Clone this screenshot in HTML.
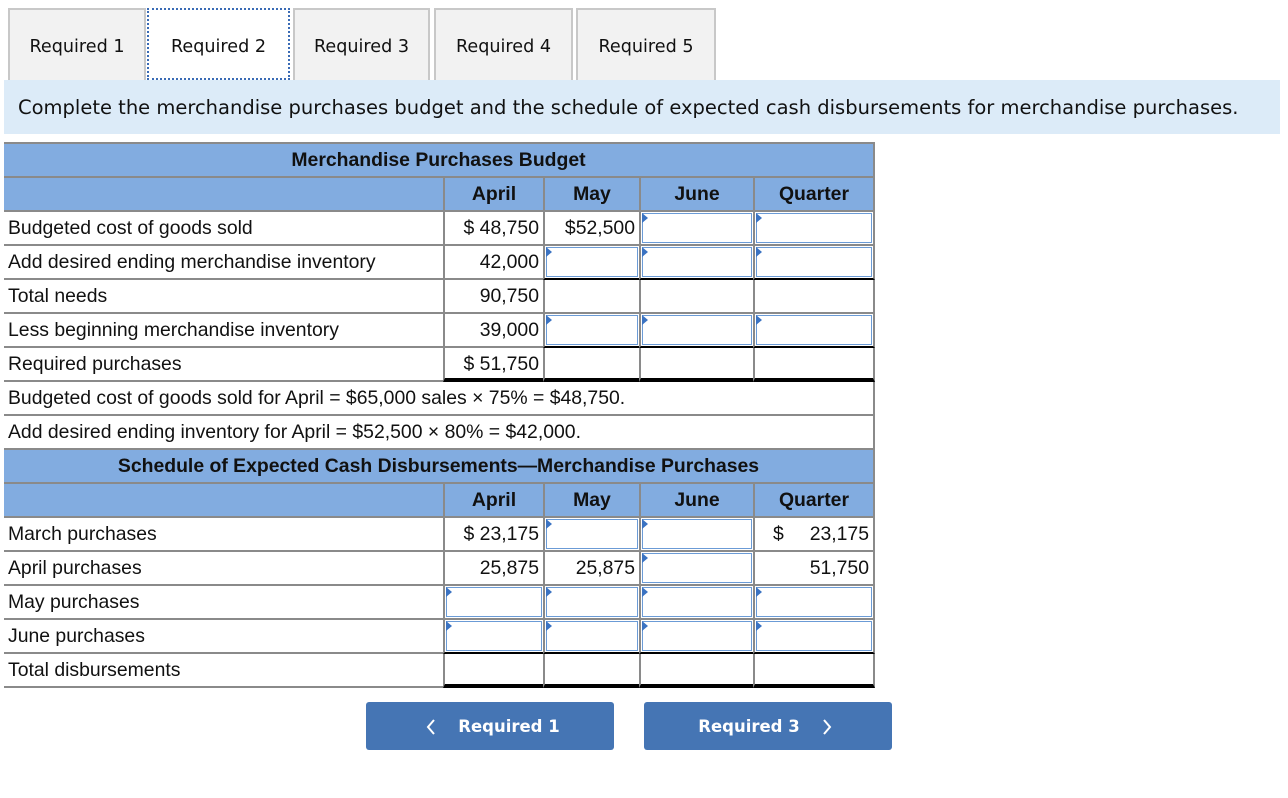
<!DOCTYPE html>
<html><head><meta charset="utf-8"><style>
body{margin:0;width:1288px;height:798px;background:#fff;position:relative;overflow:hidden;font-family:"Liberation Sans",Arial,sans-serif;}
.tab{position:absolute;top:8px;height:72px;background:#f2f2f2;border:2px solid #c8c8c8;border-bottom:none;box-sizing:border-box;font-family:"DejaVu Sans",Verdana,sans-serif;font-size:17.6px;color:#111;text-align:center;line-height:74px;}
.tab.act{background:#fff;border:2px dotted #3a6bb5;height:72px}
.bar{position:absolute;left:4px;top:80px;width:1276px;height:54px;background:#dcebf8;font-family:"DejaVu Sans",Verdana,sans-serif;font-size:19.5px;line-height:56px;color:#111;padding-left:14px;box-sizing:border-box;white-space:nowrap}
.t{position:absolute;left:4px;top:142px;width:871px;font-size:19.4px;color:#111}
.r{display:flex;height:34px}
.c{box-sizing:border-box;height:34px;border-bottom:2px solid #8a8a8a;line-height:32px;white-space:nowrap;overflow:hidden;position:relative;padding:0 4px}
.c1{width:439px}
.c2{width:100px;border-left:2px solid #8a8a8a;text-align:right}
.c3{width:96px;border-left:2px solid #8a8a8a;text-align:right}
.c4{width:114px;border-left:2px solid #8a8a8a;text-align:right}
.c5{width:122px;border-left:2px solid #8a8a8a;border-right:2px solid #8a8a8a;text-align:right}
.full{width:871px;border-right:2px solid #8a8a8a}
.blue .c{background:#82ace0;font-weight:bold;text-align:center}
.in{padding:0}
.in i{position:absolute;left:1px;top:1px;right:1px;bottom:1px;border:1.5px solid #6b9bd6;background:#fff}
.in i:before{content:"";position:absolute;left:-1px;top:-1px;border-left:6px solid #3b73c2;border-top:5px solid transparent;border-bottom:5px solid transparent}
.bk{border-bottom:2px solid #000}
.bk3{border-bottom:4px solid #000;height:34px}
.btn{position:absolute;top:702px;width:248px;height:48px;background:#4575b4;border-radius:3px;color:#fff;font-weight:bold;font-size:16.5px;line-height:50px;text-align:center;font-family:"DejaVu Sans",Verdana,sans-serif}
.btn svg{position:absolute;top:17px}
</style></head><body>
<div class="tab" style="left:8px;width:138px">Required 1</div>
<div class="tab act" style="left:147px;width:143px">Required 2</div>
<div class="tab" style="left:293px;width:137px">Required 3</div>
<div class="tab" style="left:434px;width:139px">Required 4</div>
<div class="tab" style="left:576px;width:140px">Required 5</div>
<div class="bar">Complete the merchandise purchases budget and the schedule of expected cash disbursements for merchandise purchases.</div>
<div class="t">
<div style="height:2px;background:#8a8a8a"></div>
<div class="r blue"><div class="c full">Merchandise Purchases Budget</div></div>
<div class="r blue"><div class="c c1"></div><div class="c c2">April</div><div class="c c3">May</div><div class="c c4">June</div><div class="c c5">Quarter</div></div>
<div class="r"><div class="c c1">Budgeted cost of goods sold</div><div class="c c2">$ 48,750</div><div class="c c3">$52,500</div><div class="c c4 in"><i></i></div><div class="c c5 in"><i></i></div></div>
<div class="r"><div class="c c1">Add desired ending merchandise inventory</div><div class="c c2">42,000</div><div class="c c3 in bk"><i></i></div><div class="c c4 in bk"><i></i></div><div class="c c5 in bk"><i></i></div></div>
<div class="r"><div class="c c1">Total needs</div><div class="c c2">90,750</div><div class="c c3"></div><div class="c c4"></div><div class="c c5"></div></div>
<div class="r"><div class="c c1">Less beginning merchandise inventory</div><div class="c c2">39,000</div><div class="c c3 in bk"><i></i></div><div class="c c4 in bk"><i></i></div><div class="c c5 in bk"><i></i></div></div>
<div class="r"><div class="c c1">Required purchases</div><div class="c c2 bk3">$ 51,750</div><div class="c c3 bk3"></div><div class="c c4 bk3"></div><div class="c c5 bk3"></div></div>
<div class="r"><div class="c full">Budgeted cost of goods sold for April = $65,000 sales × 75% = $48,750.</div></div>
<div class="r"><div class="c full">Add desired ending inventory for April = $52,500 × 80% = $42,000.</div></div>
<div class="r blue"><div class="c full">Schedule of Expected Cash Disbursements—Merchandise Purchases</div></div>
<div class="r blue"><div class="c c1"></div><div class="c c2">April</div><div class="c c3">May</div><div class="c c4">June</div><div class="c c5">Quarter</div></div>
<div class="r"><div class="c c1">March purchases</div><div class="c c2">$ 23,175</div><div class="c c3 in"><i></i></div><div class="c c4 in"><i></i></div><div class="c c5" style="text-align:left;padding-left:18px">$<span style="position:absolute;right:4px">23,175</span></div></div>
<div class="r"><div class="c c1">April purchases</div><div class="c c2">25,875</div><div class="c c3">25,875</div><div class="c c4 in"><i></i></div><div class="c c5">51,750</div></div>
<div class="r"><div class="c c1">May purchases</div><div class="c c2 in"><i></i></div><div class="c c3 in"><i></i></div><div class="c c4 in"><i></i></div><div class="c c5 in"><i></i></div></div>
<div class="r"><div class="c c1">June purchases</div><div class="c c2 in bk"><i></i></div><div class="c c3 in bk"><i></i></div><div class="c c4 in bk"><i></i></div><div class="c c5 in bk"><i></i></div></div>
<div class="r"><div class="c c1">Total disbursements</div><div class="c c2 bk3"></div><div class="c c3 bk3"></div><div class="c c4 bk3"></div><div class="c c5 bk3"></div></div>
</div>
<div class="btn" style="left:366px"><svg style="left:60px" width="10" height="16" viewBox="0 0 10 16"><path d="M8 1 L2 8 L8 15" fill="none" stroke="#fff" stroke-width="2"/></svg><span style="margin-left:38px">Required 1</span></div>
<div class="btn" style="left:644px"><span style="margin-right:38px">Required 3</span><svg style="left:178px" width="10" height="16" viewBox="0 0 10 16"><path d="M2 1 L8 8 L2 15" fill="none" stroke="#fff" stroke-width="2"/></svg></div>
</body></html>
